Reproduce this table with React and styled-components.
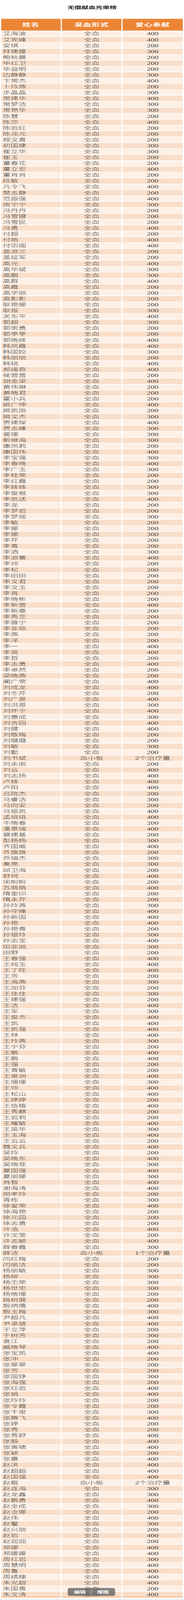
import React, { useState } from 'react'
import styled, { createGlobalStyle } from 'styled-components'

const PAGE_H = 7063;

const GlobalStyle = createGlobalStyle`
    html, body {
        margin: 0;
        padding: 0;
        background: #fff;
        overflow: hidden;
    }
    body {
        font-family: "Liberation Serif", "Noto Sans CJK SC", serif;
    }
`;

// 名单原样照录，"全血" 的行只写姓名和数量
const DATA = `艾海波 400
艾宪峰 400
安琪 200
拜建媛 300
鲍秋晨 200
毕红卫 200
毕益明 200
边静静 300
卞常杰 400
卜玲燕 200
步晶晶 300
常建华 400
常梦洁 300
常艳华 300
陈慧 200
陈莎 400
陈岩红 200
陈兆元 200
程文青 200
初国建 300
崔立华 300
崔玉 200
董春花 200
董立宏 400
董肖肖 200
段敏 200
凡令飞 400
樊志静 200
范振强 400
房宁宁 300
冯丹丹 200
冯雪键 200
冯雪民 200
冯勇 400
付超 200
付皓 400
付宗阁 400
盖淑兰 200
盖延军 200
高光 400
高华斌 300
高鹏 300
高群 400
高霞 200
高学丽 200
高影影 200
耿艳娜 200
耿振 300
关东平 400
郭超 300
郭崇勇 200
郭亭亭 200
郭晓辉 400
韩凤霞 400
韩国姣 300
韩丽丽 200
韩锐 400
郝绪奇 400
侯营营 200
胡金梁 400
黄伟琳 200
黄晓君 200
霍小兵 200
姬广坤 400
姬凯丽 200
姬文杰 300
贾建琛 400
贾志峰 300
姜珊 300
靳继海 300
康凤莉 200
康国伟 400
李宝强 300
李春晓 400
李广玉 300
李桂荣 200
李红霞 200
李辉辉 300
李俊根 300
李凯述 400
李龙 200
李梦岩 200
李梦瑶 300
李敏 200
李娜 200
李娜 300
李芹 200
李青 200
李洒 300
李淑蓁 400
李帅 200
李松 200
李田田 200
李文君 200
李文玉 200
李宵 200
李晓彬 200
李新营 400
李新章 200
李秀芝 200
李雅宁 200
李亚茹 200
李燕 200
李洋 200
李一 400
李英 400
李哲 200
李志勇 400
李卓然 200
梁晓燕 200
蔺广荣 400
刘成龙 400
刘冬芹 200
刘广昊 400
刘洪恩 300
刘怀宁 400
刘惠成 300
刘吉园 400
刘健 400
刘敬梅 200
刘璐璐 200
刘敏 300
刘勤 200
刘书斌 血小板 2个治疗量
刘永丽 200
刘云 400
刘志扬 400
卢辉 400
卢阳 400
吕院杰 200
马睿洁 300
马向安 200
马振凯 400
孟培培 400
牛晓春 200
潘景瑞 400
裴建基 200
彭杨杨 300
齐国威 400
齐旗旗 200
乔瑞杰 300
秦亮 300
邱卫海 200
舒珂 400
宋盼盼 200
苏萌萌 400
隋奎印 200
隋永芹 200
孙玲燕 300
孙守峰 400
孙新国 400
孙艳 400
孙艳青 200
孙银玲 300
孙志宝 400
田亚丽 300
田野 200
王春强 400
王纯玉 400
王丁旺 400
王芳 200
王海燕 300
王加芬 200
王佳佳 300
王建强 200
王洁 400
王军 300
王俊杰 400
王凯 400
王凯强 400
王林 400
王玲燕 300
王宁芬 200
王鹏 400
王鹏 400
王强 200
王青敏 200
王泉洲 400
王珊珊 300
王帅 400
王松山 400
王婷婷 200
王信植 400
王秀麒 200
王岩莉 200
王耀敏 400
王英华 300
王玉海 400
王云云 200
魏文兵 400
吴玲 200
吴晓东 400
吴晓菲 300
夏国强 400
夏丽娜 300
肖智 400
谢海涛 400
邢孝玲 200
胥栋 300
徐爱荣 400
徐海艳 200
徐元园 200
徐志勇 200
许浩 400
许文莹 200
许志颖 400
薛春霞 300
薛洁 血小板 1个治疗量
闫红梅 200
闫丽洁 200
杨丽敏 300
杨柳 300
杨丕荣 300
杨世忠 300
杨晓珊 200
姚树展 200
殷炳儒 400
殷玉梅 300
尹超凡 400
尹承骁 400
于立萍 200
于树芳 300
袁江 200
臧晓琴 400
张宝凯 400
张冲 200
张翠翠 200
张芳 200
张国铮 300
张海强 200
张红岩 400
张娟 400
张玲玲 200
张令霞 200
张千里 300
张腾飞 400
张婷 200
张秀 200
张秀舒 400
张毅 400
张寅啸 400
张颖 200
张震 400
赵滨 400
赵超超 400
赵国强 400
赵靓 血小板 2个治疗量
赵连海 300
赵龙鑫 300
赵鹏勇 400
赵全成 300
赵汝娜 200
赵伟 400
赵馨 300
赵兴丽 200
赵岩 400
赵迎迎 200
郑娜 400
郑媛媛 400
周红岩 300
周慧明 400
周鲁 400
周绣棣 400
朱光超 400
朱国青 200
朱文涛 400`;

const donors = DATA.split('\n').map((line) => {
    const parts = line.trim().split(/\s+/);
    if (parts.length === 3) return { name: parts[0], kind: parts[1], amount: parts[2] };
    return { name: parts[0], kind: '全血', amount: parts[1] };
});

// the window can come out shorter than the page; fit the long page into it
const getFit = () => {
    if (typeof window === 'undefined') return 1;
    const h = window.innerHeight || PAGE_H;
    return h < PAGE_H ? h / PAGE_H : 1;
};

const Frame = styled.div`
    width: 470px;
    overflow: hidden;
`;

const Page = styled.div`
    position: relative;
    width: 470px;
    height: ${PAGE_H}px;
    background: #fff;
    transform-origin: 0 0;
`;

const Title = styled.h1`
    margin: 0;
    padding: 20px 0 39px;
    text-align: center;
    font-family: "Noto Sans CJK SC", sans-serif;
    font-size: 18px;
    line-height: 24px;
    font-weight: 700;
    color: #1c1c1c;
`;

const Board = styled.div`
    display: flex;
    flex-direction: column;
    gap: 2px;
    margin: 0 3px;
`;

const Row = styled.div`
    display: grid;
    grid-template-columns: 152px 152px 154px;
    column-gap: 3px;
    height: ${(p) => (p.$head ? '52px' : '24px')};
    flex: none;
`;

const HeadCell = styled.div`
    display: flex;
    align-items: center;
    justify-content: center;
    background: #eb8535;
    color: #fff;
    font-family: "Noto Sans CJK SC", serif;
    font-size: 21px;
    font-weight: 700;
    letter-spacing: 1px;
`;

const Cell = styled.div`
    box-sizing: border-box;
    padding: 0 4px;
    display: flex;
    align-items: center;
    justify-content: ${(p) => (p.$center ? 'center' : 'flex-start')};
    background: ${(p) => (p.$dark ? '#f9dec9' : '#fcf0e7')};
    border-bottom: ${(p) => (p.$last ? '2px solid #eb8535' : 'none')};
    color: #444;
    font-family: "Liberation Serif", "Noto Sans CJK SC", serif;
    font-size: 20px;
    font-weight: 300;
    line-height: 22px;
    white-space: nowrap;
    overflow: hidden;
`;

const Footer = styled.div`
    margin-top: 6px;
    height: 6px;
    background: #edf2f8;
`;

const Toolbar = styled.div`
    position: absolute;
    left: 173px;
    bottom: 18px;
    width: 121px;
    height: 35px;
    border-radius: 6px;
    background: rgba(96, 96, 96, 0.78);
    display: flex;
    align-items: center;
    justify-content: center;
    gap: 14px;
    color: #fff;
    font-family: "Noto Sans CJK SC", sans-serif;
    font-size: 15px;
    font-weight: 700;
`;

const Divider = styled.span`
    width: 1px;
    height: 18px;
    background: rgba(255, 255, 255, 0.7);
`;

const App = () => {
    const [fit] = useState(getFit);

    return (
        <>
            <GlobalStyle />
            <Frame style={{ height: Math.floor(PAGE_H * fit) }}>
                <Page style={{ transform: `scaleY(${fit})` }}>
                    <Title>无偿献血光荣榜</Title>
                    <Board>
                        <Row $head>
                            <HeadCell>姓名</HeadCell>
                            <HeadCell>采血形式</HeadCell>
                            <HeadCell>爱心奉献</HeadCell>
                        </Row>
                        {donors.map((d, i) => {
                            const dark = i % 2 === 1;
                            const last = i === donors.length - 1;
                            return (
                                <Row key={i}>
                                    <Cell $dark={dark} $last={last}>{d.name}</Cell>
                                    <Cell $dark={dark} $last={last} $center>{d.kind}</Cell>
                                    <Cell $dark={dark} $last={last} $center>{d.amount}</Cell>
                                </Row>
                            );
                        })}
                    </Board>
                    <Footer />
                    <Toolbar>
                        <span>编辑</span>
                        <Divider />
                        <span>搜图</span>
                    </Toolbar>
                </Page>
            </Frame>
        </>
    )
}

export default App
